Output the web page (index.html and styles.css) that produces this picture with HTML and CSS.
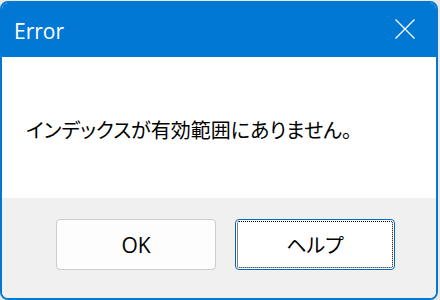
FILE: index.html
```html
<!DOCTYPE html>
<html lang="ja">
<head>
<meta charset="utf-8">
<link rel="stylesheet" href="styles.css">
</head>
<body>
<div class="window">
  <div class="titlebar">
    <span class="title">Error</span>
    <svg class="close" width="20" height="20" viewBox="0 0 20 20"><path d="M0.5 0.5 L19.5 19.5 M19.5 0.5 L0.5 19.5" stroke="#fff" stroke-width="1.3" fill="none"/></svg>
  </div>
  <div class="content">
    <p class="message">インデックスが有効範囲にありません。</p>
  </div>
  <div class="footer">
    <button class="btn">OK</button>
    <button class="btn focused">ヘルプ</button>
  </div>
</div>
</body>
</html>
```
FILE: styles.css
```css
html, body {
  margin: 0;
  padding: 0;
}
body {
  width: 440px;
  height: 300px;
  background: #e9e9e9;
  font-family: "Open Sans", "Noto Sans CJK JP", sans-serif;
}
.window {
  box-sizing: border-box;
  width: 438px;
  height: 299px;
  margin-top: 1px;
  border: 2px solid #0078d4;
  border-radius: 8px;
  overflow: hidden;
  display: flex;
  flex-direction: column;
  background: #fff;
}
.titlebar {
  height: 54px;
  flex: none;
  background: #0078d4;
  color: #fff;
  display: flex;
  align-items: center;
  justify-content: space-between;
  padding: 0 21px 0 12px;
}
.title {
  font-family: "Open Sans", sans-serif;
  font-size: 21px;
  padding-top: 1px;
}
.close {
  display: block;
  margin-top: -2px;
}
.content {
  height: 141px;
  flex: none;
  display: flex;
  align-items: center;
  padding: 3px 0 0 24px;
  box-sizing: border-box;
}
.message {
  margin: 0;
  font-family: "Noto Sans CJK JP", sans-serif;
  font-size: 20px;
  font-feature-settings: "palt";
  color: #000;
}
.footer {
  flex: 1;
  background: #f0f0f0;
  display: flex;
  gap: 19px;
  padding: 21px 0 0 54px;
}
.btn {
  box-sizing: border-box;
  width: 160px;
  height: 51px;
  background: #fdfdfd;
  border: 1px solid #cccccc;
  border-radius: 4px;
  font-family: "Open Sans", "Noto Sans CJK JP", sans-serif;
  font-size: 21px;
  font-feature-settings: "palt";
  color: #000;
  padding: 0;
}
.btn.focused {
  border: 1px solid #0067c0;
  background: #fff;
  outline: 1px dotted #000;
  outline-offset: -3px;
  font-size: 20px;
}
```
